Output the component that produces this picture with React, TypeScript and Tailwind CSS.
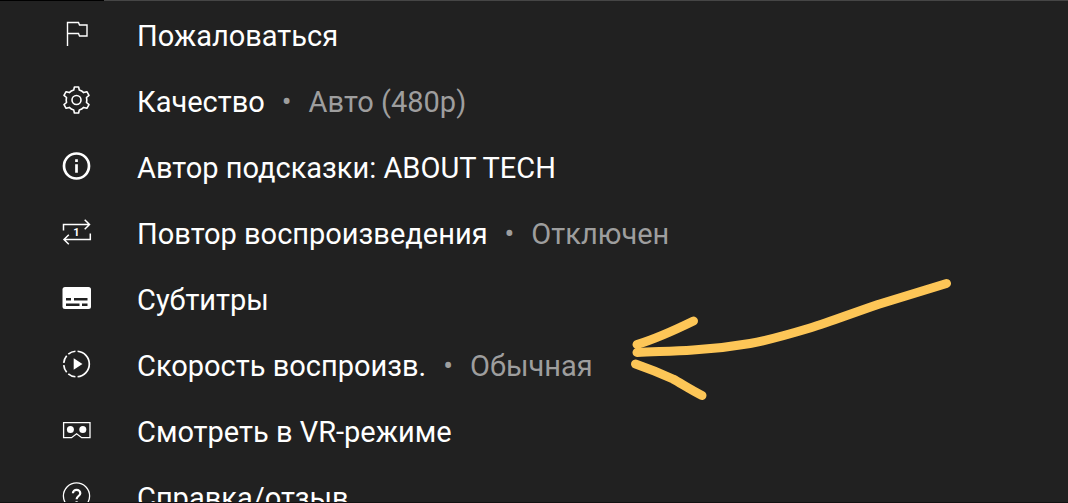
import type { ReactNode } from 'react';

type MenuItem = {
  id: string;
  label: string;
  value?: string;
  icon: ReactNode;
};

const items: MenuItem[] = [
  {
    id: 'report',
    label: 'Пожаловаться',
    icon: <path d="M6.5 28V4.5H17.5L18.5 7H26V18H18.5L17.5 15.5H6.5" strokeWidth="1.4" />,
  },
  {
    id: 'quality',
    label: 'Качество',
    value: 'Авто (480p)',
    icon: (
      <g transform="translate(15.5 16)" strokeWidth="1.6" strokeLinejoin="round">
        <circle r="4.5" />
        <path d="M2.1 -13L2.8 -9.9Q5.4 -9.2 7.2 -7.4L10.4 -8.3L12.5 -4.7L10 -2.5Q10.6 0 10 2.5L12.5 4.7L10.4 8.3L7.2 7.4Q5.4 9.2 2.8 9.9L2.1 13H-2.1L-2.8 9.9Q-5.4 9.2 -7.2 7.4L-10.4 8.3L-12.5 4.7L-10 2.5Q-10.6 0 -10 -2.5L-12.5 -4.7L-10.4 -8.3L-7.2 -7.4Q-5.4 -9.2 -2.8 -9.9L-2.1 -13Z" />
      </g>
    ),
  },
  {
    id: 'hint',
    label: 'Автор подсказки: ABOUT TECH',
    icon: (
      <g strokeWidth="2.7">
        <circle cx="15.5" cy="16" r="12.5" />
        <path d="M15.5 9.3v2.7M15.5 14.3v8.5" />
      </g>
    ),
  },
  {
    id: 'loop',
    label: 'Повтор воспроизведения',
    value: 'Отключен',
    icon: (
      <>
        <path
          d="M2.5 14.5V8.5H28.5M23.7 3.7l4.8 4.8-4.8 4.8M29.3 17.5V23.5H3M7.8 18.7L3 23.5l4.8 4.8"
          strokeWidth="1.5"
        />
        <text x="15.5" y="20" textAnchor="middle" className="fill-white stroke-none text-[11px] font-bold">
          1
        </text>
      </>
    ),
  },
  {
    id: 'captions',
    label: 'Субтитры',
    icon: (
      <g stroke="none">
        <rect x="1.5" y="5" width="28.5" height="22" rx="2.5" fill="currentColor" />
        <path d="M5 16h5v2.5H5zM13 16h13.5v2.5H13zM5 21.5h13.5V24H5zM21 21.5h5.5V24H21z" fill="#212121" />
      </g>
    ),
  },
  {
    id: 'speed',
    label: 'Скорость воспроизв.',
    value: 'Обычная',
    icon: (
      <>
        <g strokeWidth="1.7">
          <path d="M15.5 3.2A12.8 12.8 0 0 1 15.5 28.8" pathLength="180" strokeDasharray="0 5 170 5" />
          <path
            d="M15.5 3.2A12.8 12.8 0 0 0 15.5 28.8"
            pathLength="180"
            strokeDasharray="0 5 35 10 35 10 35 10 35 5"
          />
        </g>
        <path d="M12.7 10.3L21.5 16l-8.8 5.7z" fill="currentColor" stroke="none" />
      </>
    ),
  },
  {
    id: 'vr',
    label: 'Смотреть в VR-режиме',
    icon: (
      <>
        <path d="M2.6 8.6H29V23.7H20.7L15.6 19.8 10.5 23.7H2.6z" strokeWidth="1.3" />
        <circle cx="9.4" cy="15.4" r="3.5" fill="currentColor" stroke="none" />
        <circle cx="21.8" cy="15.4" r="3.5" fill="currentColor" stroke="none" />
      </>
    ),
  },
  {
    id: 'help',
    label: 'Справка/отзыв',
    icon: (
      <>
        <circle cx="15.5" cy="16" r="13.1" strokeWidth="1.3" />
        <path d="M11.9 13.2a3.7 3.3 0 0 1 7.4 0c0 2.7-3.7 2.9-3.7 6M15.6 21.3v2.4" strokeWidth="2.2" />
      </>
    ),
  },
];

function MenuRow({ label, value, icon }: Omit<MenuItem, 'id'>) {
  return (
    <li>
      <button type="button" className="flex h-[66px] w-full items-center pl-[61px] text-left">
        <svg
          viewBox="0 0 32 32"
          className="h-8 w-8 shrink-0 text-white"
          fill="none"
          stroke="currentColor"
          aria-hidden="true"
        >
          {icon}
        </svg>
        <span className="ml-11 flex items-center pt-1 text-[29px] leading-8 whitespace-nowrap text-white">
          {label}
          {value && (
            <span className="flex text-[#9e9e9e]">
              <span className="mx-[17px]">•</span>
              {value}
            </span>
          )}
        </span>
      </button>
    </li>
  );
}

export default function App() {
  return (
    <main className="relative flex h-screen flex-col overflow-hidden border-b border-[#111111] bg-[#212121] font-[Roboto,sans-serif]">
      <div className="flex h-px shrink-0 bg-[#464646]">
        <div className="w-[104px] bg-black" />
      </div>

      <ul>
        {items.map(({ id, ...item }) => (
          <MenuRow key={id} {...item} />
        ))}
      </ul>

      {/* Hand-drawn arrow over the playback speed row */}
      <svg
        viewBox="628 276 328 128"
        className="pointer-events-none absolute top-[276px] left-[628px] h-32 w-[328px]"
        fill="none"
        stroke="#fdc657"
        strokeWidth="9"
        strokeLinecap="round"
        strokeLinejoin="round"
        aria-hidden="true"
      >
        <path d="M946.5 283.5L878 304.5C850 314 830 322 810 328C790 334 770 340 750 343.5C730 347 712 349 693 350C674 351.5 655 351.5 637 352.5" />
        <path d="M637 344.5C655 339 673 331 693.5 321" />
        <path d="M635.5 364C650 369 662 374 673 379C682 384 691 390 702 395.5" />
      </svg>
    </main>
  );
}
